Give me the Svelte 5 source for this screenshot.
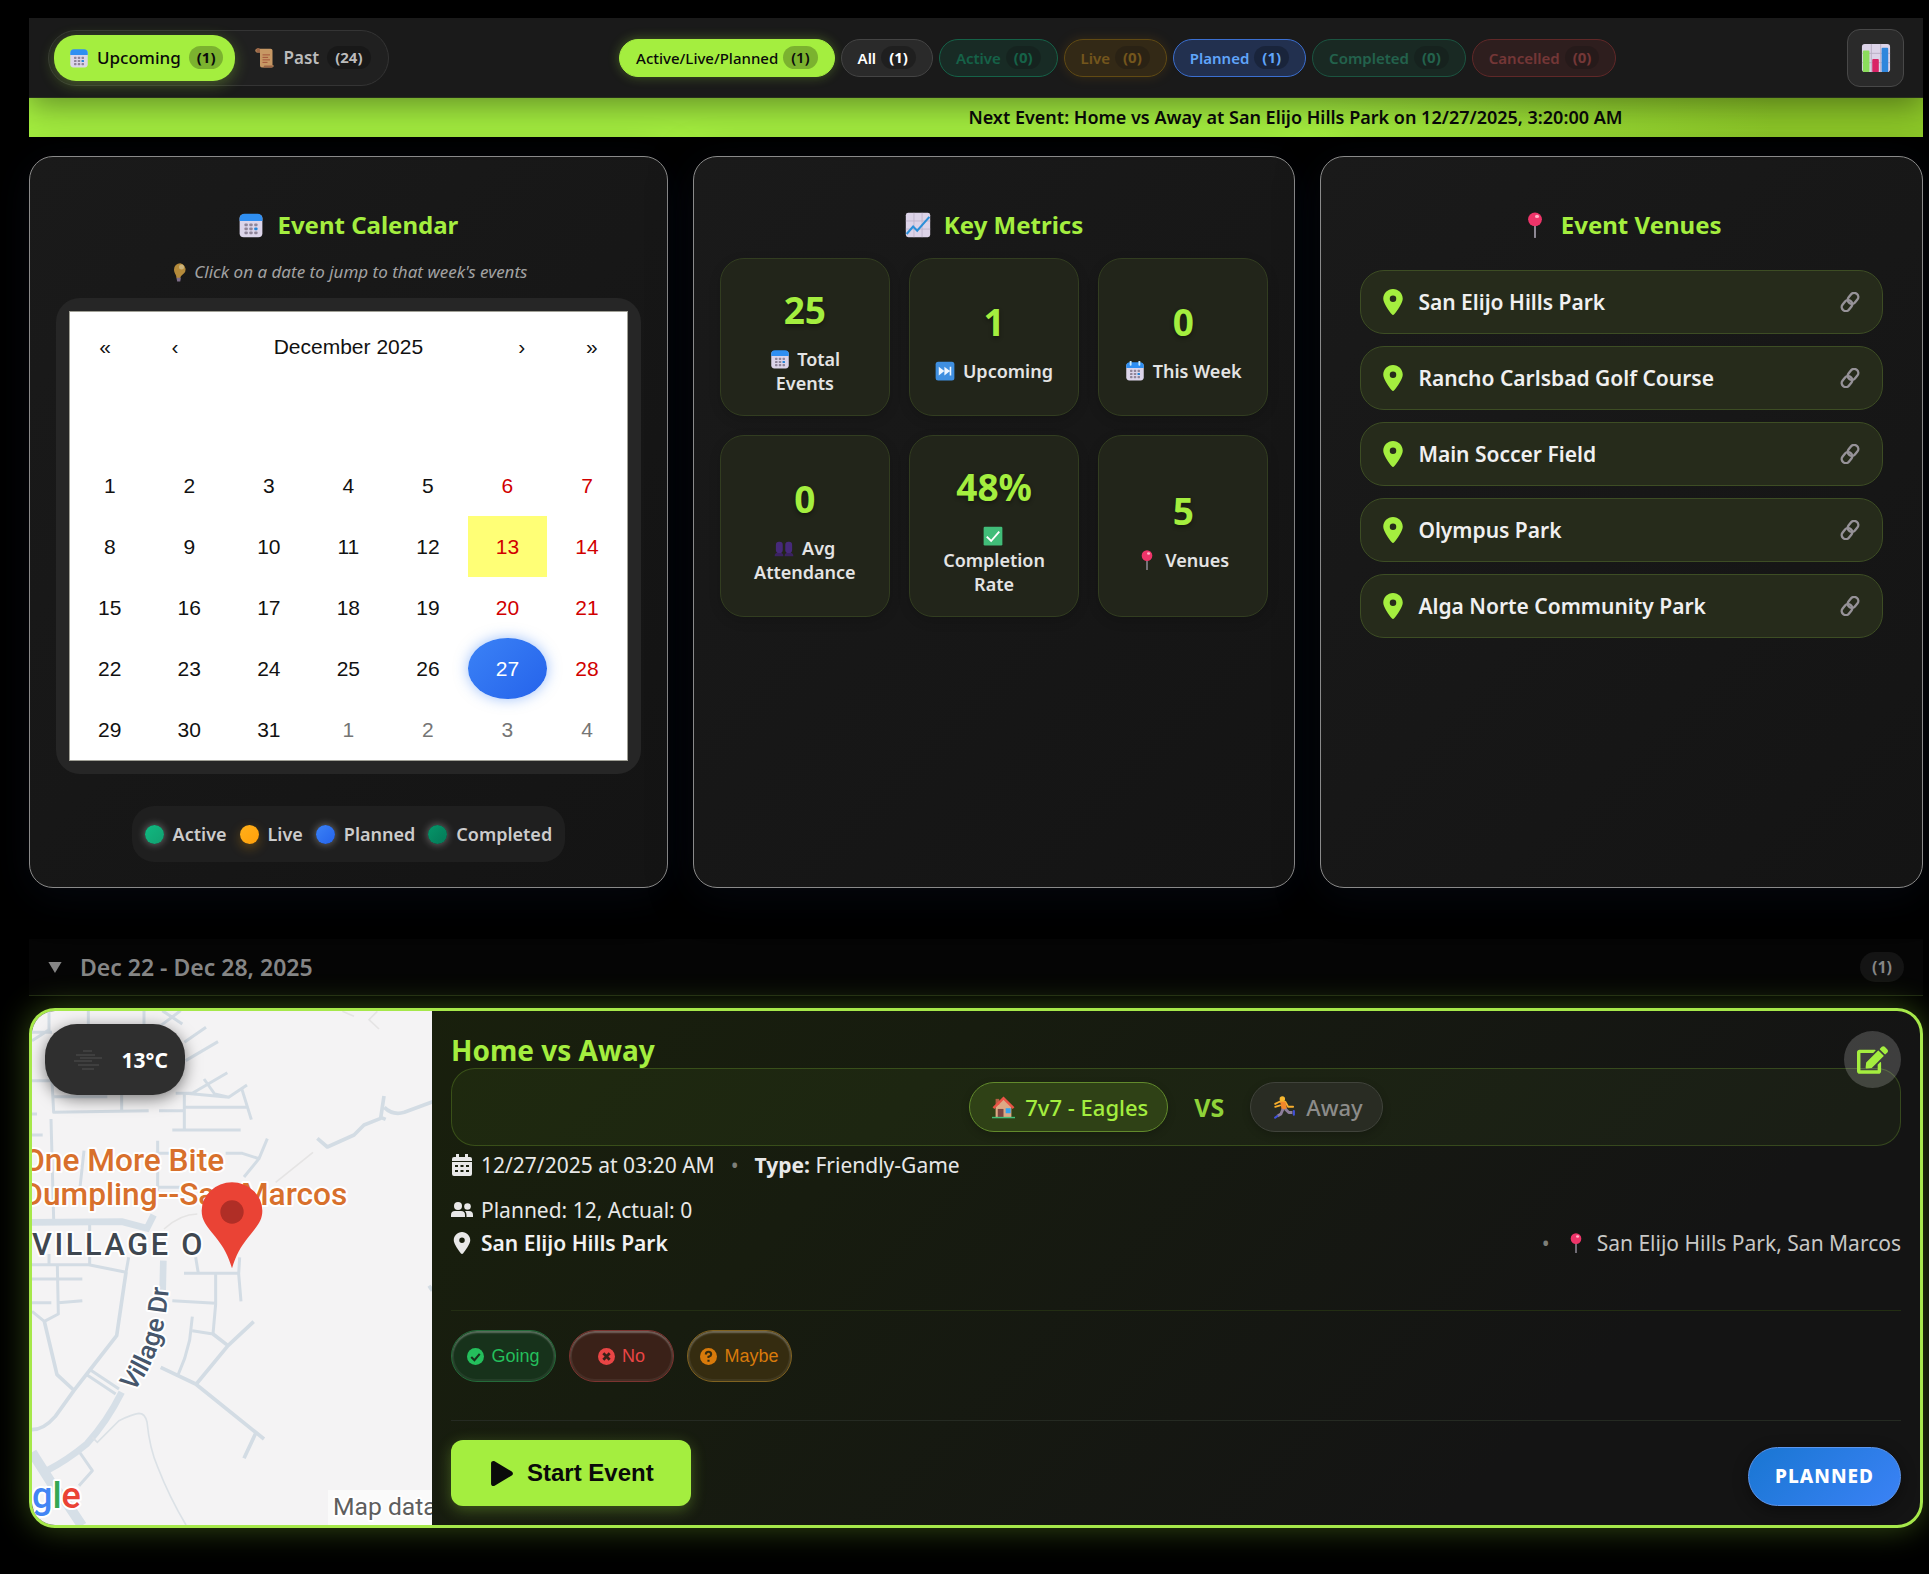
<script>
let view = $state('Upcoming');
let filter = $state('Active/Live/Planned');

const views = [
    { title: 'Upcoming', count: 1, icon: 'calendar' },
    { title: 'Past', count: 24, icon: 'scroll' },
];

const filters = [
    { title: 'Active/Live/Planned', count: 1, tone: 'all' },
    { title: 'All', count: 1, tone: 'all' },
    { title: 'Active', count: 0, tone: 'active' },
    { title: 'Live', count: 0, tone: 'live' },
    { title: 'Planned', count: 1, tone: 'planned' },
    { title: 'Completed', count: 0, tone: 'completed' },
    { title: 'Cancelled', count: 0, tone: 'cancelled' },
];

const metrics = [
    { value: '25', label: 'Total Events', icon: 'calendar' },
    { value: '1', label: 'Upcoming', icon: 'next' },
    { value: '0', label: 'This Week', icon: 'rings' },
    { value: '0', label: 'Avg Attendance', icon: 'people' },
    { value: '48%', label: 'Completion Rate', icon: 'check' },
    { value: '5', label: 'Venues', icon: 'pushpin' },
];

const venues = [
    'San Elijo Hills Park',
    'Rancho Carlsbad Golf Course',
    'Main Soccer Field',
    'Olympus Park',
    'Alga Norte Community Park',
];

const legend = ['Active', 'Live', 'Planned', 'Completed'];

// five weeks, Monday first, running over into January
const weeks = Array.from({ length: 5 }, (_, w) =>
    Array.from({ length: 7 }, (_, d) => {
        const n = w * 7 + d + 1;
        return { day: n > 31 ? n - 31 : n, weekend: d > 4, other: n > 31, today: n === 13, event: n === 27 };
    })
);
</script>

{#snippet emoji(name)}
  <svg class="emoji" viewBox="0 0 32 32" aria-hidden="true">
    {#if name === 'calendar' || name === 'rings'}
      <rect x="2" y="3" width="28" height="28" rx="5" fill="#dcd5ea" />
      <path d="M2 11V8a6 6 0 0 1 6-6h16a6 6 0 0 1 6 6v3z" fill="#2f8ff2" />
      {#each [15, 20, 25] as y}
        {#each [8, 14, 20] as x}
          <rect {x} y={y - 1} width="4" height="3.5" rx="1" fill={x === 20 && y === 20 ? '#2585d8' : '#8f8599'} />
        {/each}
      {/each}
      {#if name === 'rings'}
        <path d="M9 0v6M23 0v6" stroke="#c9ecff" stroke-width="3" stroke-linecap="round" />
      {/if}
    {:else if name === 'scroll'}
      <path d="M3 1h22a3 3 0 0 1 3 3v23l2 1a3 3 0 0 1-3 3H11a3 3 0 0 1-3-3V7H4a3 3 0 0 1-1-6z" fill="#c79864" />
      <path d="M2 3a3 3 0 0 1 6 0v4H4a2 2 0 0 1-2-2zM15 28h14a3 3 0 0 1-3 3H13z" fill="#9a6546" />
      <path d="M12 11h12M12 15h9M12 19h12M12 23h8" stroke="#a4553c" stroke-width="1.6" />
    {:else if name === 'growth'}
      <rect x="1" y="1" width="30" height="30" rx="3" fill="#dcd3e8" />
      <path d="M11 1v30M21 1v30M1 11h30M1 21h30" stroke="#bdb2c9" stroke-width="1" />
      <path d="M2 27l8-9 5 5L30 6" fill="none" stroke="#2b8fd8" stroke-width="2.6" />
    {:else if name === 'bars'}
      <rect x="1" y="1" width="30" height="30" rx="3" fill="#dcd3e8" />
      <path d="M11 1v30M21 1v30M1 11h30M1 21h30" stroke="#b7adc3" />
      <rect x="2" y="8" width="7" height="23" rx="1" fill="#8bdc5c" />
      <rect x="12" y="17" width="7" height="14" rx="1" fill="#d92366" />
      <rect x="22" y="5" width="7" height="26" rx="1" fill="#2f86dc" />
    {:else if name === 'pushpin'}
      <path d="M16 17v14" stroke="#9c96a3" stroke-width="2.2" stroke-linecap="round" />
      <circle cx="16" cy="9" r="8.5" fill="#ee3469" />
      <ellipse cx="18.500" cy="5.500" rx="2.500" ry="2" fill="#ffb3c8" />
    {:else if name === 'bulb'}
      <path d="M18 2a10 10 0 0 1 8 13c-1 4-7 5-8 11h-6c0-6-4-8-4-14A10 10 0 0 1 18 2z" fill="#b48a3a" />
      <circle cx="20" cy="8" r="4" fill="#cdb47a" />
      <path d="M12 25h7l-1 6h-5z" fill="#7d6d88" />
    {:else if name === 'next'}
      <rect x="1" y="1" width="30" height="30" rx="4" fill="#3f8fe0" />
      <path d="M6 9l9 7-9 7zM15 9l9 7-9 7zM23.500 9h2.500v14h-2.500z" fill="#eef6ff" />
    {:else if name === 'people'}
      <path d="M1 29c0-4 2-6 7-6s7 2 7 6zM17 29c0-4 2-6 7-6s7 2 7 6z" fill="#3b2262" />
      <rect x="3" y="6" width="11" height="18" rx="5" fill="#46297a" />
      <rect x="18" y="6" width="11" height="18" rx="5" fill="#46297a" />
    {:else if name === 'check'}
      <rect x="1" y="1" width="30" height="30" rx="2" fill="#41bd79" />
      <path d="M6 17l7 7L26 9" fill="none" stroke="#fff" stroke-width="3" />
    {:else if name === 'house'}
      <path d="M5 14L16 4l11 10v16H5z" fill="#dda985" />
      <path d="M5 4h5v8H5z" fill="#b25d42" />
      <path d="M2 17L16 3l14 14" fill="none" stroke="#ea5446" stroke-width="3.4" />
      <path d="M8 18h8v12H8z" fill="#7d4540" />
      <path d="M19 17h7v7h-7z" fill="#36a3ee" />
      <path d="M0 29h32v2H0z" fill="#45bf78" />
    {:else if name === 'runner'}
      <circle cx="13" cy="4" r="3.800" fill="#f6b72f" />
      <path d="M3 11l6-3h8l4 7h7M10 13l-7 2" fill="none" stroke="#f7ad2c" stroke-width="2.600" stroke-linecap="round" stroke-linejoin="round" />
      <path d="M10 8h7l3 11h-8z" fill="#f4862b" />
      <path d="M14 18l-3 7-5 3M17 18l5 5h5" fill="none" stroke="#8d7e9b" stroke-width="4" stroke-linejoin="round" />
      <path d="M6 28l-3 2M29 21v5" stroke="#4051d8" stroke-width="3" stroke-linecap="round" />
    {:else if name === 'link'}
      <g fill="none" stroke="#969298" stroke-width="3.800" transform="rotate(-50 16 16)">
        <rect x="-1" y="9.500" width="19" height="13" rx="6.500" />
        <rect x="14" y="9.500" width="19" height="13" rx="6.500" />
      </g>
    {/if}
  </svg>
{/snippet}

{#snippet marker()}
  <svg class="marker" viewBox="0 0 384 512" fill="currentColor" aria-hidden="true">
    <path d="M215.700 499.200C267 435 384 279.400 384 192 384 86 298 0 192 0S0 86 0 192c0 87.400 117 243 168.300 307.200 12.300 15.300 35.100 15.300 47.400 0zM192 128a64 64 0 1 1 0 128 64 64 0 1 1 0-128z" />
  </svg>
{/snippet}

<div class="page">
  <header class="toolbar">
    <nav class="views">
      {#each views as item}
        <button class="view" class:selected={view === item.title} onclick={() => (view = item.title)}>
          {@render emoji(item.icon)}
          {item.title}
          <span class="count">({item.count})</span>
        </button>
      {/each}
    </nav>
    <div class="filters">
      {#each filters as item}
        <button
          class="filter {item.tone}"
          class:selected={filter === item.title}
          class:empty={item.count === 0}
          onclick={() => (filter = item.title)}
        >
          {item.title}
          <span class="count">({item.count})</span>
        </button>
      {/each}
    </div>
    <button class="stats" aria-label="Statistics">{@render emoji('bars')}</button>
  </header>

  <div class="ticker">
    <span>Next Event: Home vs Away at San Elijo Hills Park on 12/27/2025, 3:20:00 AM</span>
  </div>

  <div class="panels">
    <section class="panel">
      <h2>{@render emoji('calendar')}Event Calendar</h2>
      <p class="hint">{@render emoji('bulb')}Click on a date to jump to that week's events</p>
      <div class="calendar-wrap">
        <div class="calendar">
          <div class="calendar-nav">
            <button class="arrow">«</button>
            <button class="arrow">‹</button>
            <button class="month">December 2025</button>
            <button class="arrow">›</button>
            <button class="arrow">»</button>
          </div>
          <table>
            <tbody>
              {#each weeks as week}
                <tr>
                  {#each week as date}
                    <td>
                      <button
                        class="day"
                        class:weekend={date.weekend}
                        class:other={date.other}
                        class:today={date.today}
                        class:event={date.event}>{date.day}</button
                      >
                    </td>
                  {/each}
                </tr>
              {/each}
            </tbody>
          </table>
        </div>
      </div>
      <ul class="legend">
        {#each legend as item}
          <li><i class="dot {item.toLowerCase()}"></i>{item}</li>
        {/each}
      </ul>
    </section>

    <section class="panel">
      <h2>{@render emoji('growth')}Key Metrics</h2>
      <div class="metrics">
        {#each metrics as item}
          <div class="metric">
            <strong>{item.value}</strong>
            <span>{@render emoji(item.icon)} {item.label}</span>
          </div>
        {/each}
      </div>
    </section>

    <section class="panel">
      <h2>{@render emoji('pushpin')}Event Venues</h2>
      <div class="venues">
        {#each venues as venue}
          <a class="venue" href="#venue">
            {@render marker()}
            <span>{venue}</span>
            {@render emoji('link')}
          </a>
        {/each}
      </div>
    </section>
  </div>

  <button class="week">
    <svg class="caret" viewBox="0 0 12 10" aria-hidden="true"><path d="M0 0h12L6 10z" fill="currentColor" /></svg>
    <span class="range">Dec 22 - Dec 28, 2025</span>
    <span class="week-count">(1)</span>
  </button>

  <article class="event-card">
    <div class="media">
      <svg class="map" viewBox="9 11 1200 1542" preserveAspectRatio="xMidYMid slice" role="img" aria-label="Map">
        <rect x="0" y="0" width="1220" height="1570" fill="#f4f3f4" />
        <g fill="none" stroke="#d3dce4" stroke-width="9" stroke-linejoin="round">
          <path d="M60 10v60M178 10v50M345 10v40M9 75h60M9 100l50-32M400 10l60 40M455 10l-60 45" />
          <path d="M9 220h60l5 95 285-5M390 310h76M278 230v80M75 268h160M466 105l65-45M470 160l97-57" />
          <path d="M440 258h50l105-62M525 215l32 45 42 10 55-37M637 240l30 97M470 258l130 12M466 255v115M470 300h182M430 368h205" />
          <path d="M66 335l8 300M9 320h15M9 383h32M386 400v150M165 430l-12 110M590 438h50l50 16 25-60M690 454l-45 55M380 438h60M386 540h90" />
          <path d="M60 740v30M182 650v120M9 772h170l112 23 8-45M85 775l3 145-42 22-37-30M9 815h151M9 886h58M88 886l72-6" />
          <path d="M46 942l38 160 50 46M291 795l-28 190-78 100-50 64-56 78q-35 40-70 40" stroke-width="11" />
          <path d="M465 798h160M632 750l-3 50 7 82M500 750l8 48M560 800v90l-8 90-62-10M430 880l130 8M490 928l-8 70-15 55-20 50" />
          <path d="M552 980l45 35 77-72M597 1015l-95 115M395 1080l105 50 205 165M680 1278l-35 75" stroke-width="11" />
          <path d="M865 393l30 26 80-36 30-30 50-20 10-67M1055 330l15 6M1066 300q25 25 60 15l85-32M1200 835l10 15" stroke-width="11" />
          <path d="M145 1325l45 65-40 45M180 1085l90 60M170 1100l90 60" />
        </g>
        <g fill="none" stroke="#d6dfe7" stroke-width="20">
          <path d="M9 645l270-2 75 20 20-40M403 760l-2 90M278 1155q-45 90-105 155-60 50-120 80" />
          <path d="M9 1335l60 95 50 65 40 60" stroke-width="30" />
        </g>
        <g fill="none" stroke="#dbe1e6" stroke-width="5">
          <path d="M190 1290l15 15 65-65q40-20 60-22 18 0 24 26 8 80 32 135 35 90 85 174" />
          <path d="M740 525l112-90M405 665q50-45 100-45M940 12l35 15M1045 12l-25 25 30 28" stroke="#e5e4e4" />
        </g>
        <g class="place">
          <text x="-18" y="492">One More Bite</text>
          <text x="-20" y="592">Dumpling--San Marcos</text>
        </g>
        <text class="district" x="9" y="742">VILLAGE O</text>
        <path id="village-dr" d="M312 1154Q412 1040 422 800" fill="none" />
        <text class="street"><textPath href="#village-dr">Village Dr</textPath></text>
        <path d="M609 783c-12-40-24-62-50-95-28-34-41-50-41-78a91 85 0 0 1 182 0c0 28-13 44-41 78-26 33-38 55-50 95z" fill="#ea4335" />
        <circle cx="609" cy="614" r="35" fill="#b02e26" />
        <text class="google" x="9" y="1503"><tspan fill="#4285f4">g</tspan><tspan fill="#34a853">l</tspan><tspan fill="#ea4335">e</tspan></text>
        <rect x="897" y="1448" width="320" height="110" fill="#fafafa" />
        <text class="credit" x="912" y="1523">Map data</text>
      </svg>
      <div class="weather">
        <svg viewBox="0 0 28 20" aria-hidden="true">
          <path d="M9 1h9M2 5h19M6 8h22M0 11h18M4 15h21M8 19h12" stroke="#454545" stroke-width="1.500" />
        </svg>
        13°C
      </div>
    </div>

    <div class="details">
      <h3>Home vs Away</h3>
      <div class="teams">
        <span class="team home">{@render emoji('house')}7v7 - Eagles</span>
        <b class="vs">VS</b>
        <span class="team away">{@render emoji('runner')}Away</span>
      </div>
      <div class="row when">
        <svg class="glyph" viewBox="0 0 20 22" fill="currentColor" fill-rule="evenodd" aria-hidden="true">
          <path d="M4 0h3v3h6V0h3v3h2a2 2 0 0 1 2 2v2H0V5a2 2 0 0 1 2-2h2zM0 8h20v12a2 2 0 0 1-2 2H2a2 2 0 0 1-2-2zM3 11v2h3v-2zM8.500 11v2h3v-2zM14 11v2h3v-2zM3 16v2h3v-2zM8.500 16v2h3v-2zM14 16v2h3v-2z" />
        </svg>
        12/27/2025 at 03:20 AM
        <span class="sep">•</span>
        <span><b>Type:</b> Friendly-Game</span>
      </div>
      <div class="row">
        <svg class="glyph" viewBox="0 0 22 18" fill="currentColor" aria-hidden="true">
          <circle cx="7" cy="5" r="4" /><circle cx="16.500" cy="5.500" r="3.300" />
          <path d="M0 14q0-4 4-4h6q4 0 4 4v2H0zM15.500 16v-2q0-2.500-1.500-4h4q4 0 4 4v2z" />
        </svg>
        Planned: 12, Actual: 0
      </div>
      <div class="row">
        {@render marker()}
        <span class="park">San Elijo Hills Park</span>
        <span class="sep end">•</span>
        <span class="address">{@render emoji('pushpin')}San Elijo Hills Park, San Marcos</span>
      </div>

      <div class="rsvp">
        <button class="answer going">
          <svg viewBox="0 0 16 16" aria-hidden="true"><circle cx="8" cy="8" r="8" fill="currentColor" /><path d="M4 8.500l3 3 5-6" fill="none" stroke="#17321b" stroke-width="2" /></svg>
          Going
        </button>
        <button class="answer no">
          <svg viewBox="0 0 16 16" aria-hidden="true"><circle cx="8" cy="8" r="8" fill="currentColor" /><path d="M5 5l6 6M11 5l-6 6" stroke="#3a2118" stroke-width="2.600" /></svg>
          No
        </button>
        <button class="answer maybe">
          <svg viewBox="0 0 16 16" aria-hidden="true"><circle cx="8" cy="8" r="8" fill="currentColor" /><path d="M5.500 6q0-2.500 2.500-2.500T10.500 6Q10.500 7.300 8 8.300V9.500M8 11v2" fill="none" stroke="#352c10" stroke-width="2" /></svg>
          Maybe
        </button>
      </div>

      <footer>
        <button class="start">
          <svg viewBox="0 0 448 512" fill="currentColor" aria-hidden="true">
            <path d="M424.400 214.700L72.400 6.600C43.800-10.300 0 6.100 0 47.900V464c0 37.500 40.700 60.100 72.400 41.300l352-208c31.400-18.500 31.500-64.100 0-82.600z" />
          </svg>
          Start Event
        </button>
        <span class="status">PLANNED</span>
      </footer>
    </div>

    <button class="edit" aria-label="Edit event">
      <svg viewBox="0 0 576 512" fill="currentColor" aria-hidden="true">
        <path d="M402.600 83.200l90.200 90.200c3.800 3.800 3.800 10 0 13.800L274.400 405.600l-92.800 10.300c-12.400 1.400-22.900-9.100-21.500-21.500l10.300-92.800L388.800 83.200c3.800-3.800 10-3.800 13.800 0zm162-22.900l-48.800-48.800c-15.200-15.200-39.900-15.200-55.200 0l-35.400 35.400c-3.800 3.800-3.800 10 0 13.800l90.200 90.200c3.800 3.800 10 3.800 13.800 0l35.400-35.400c15.200-15.300 15.200-40 0-55.200zM384 346.200V448H64V128h229.800c3.200 0 6.200-1.300 8.500-3.500l40-40c7.600-7.600 2.200-20.500-8.500-20.500H48C21.500 64 0 85.500 0 112v352c0 26.500 21.500 48 48 48h352c26.500 0 48-21.500 48-48V306.200c0-10.700-12.900-16-20.500-8.500l-40 40c-2.200 2.300-3.500 5.300-3.500 8.500z" />
      </svg>
    </button>
  </article>
</div>

<style>
:global(body) {
  background: #000;
}

.page {
  --lime: #a4ee3f;
  --arial: "Liberation Sans", Arial, sans-serif;
  padding: 18px 6px 44px 29px;
  color: #e8e8e8;
  font-family: "Noto Sans", "Open Sans", sans-serif;
  font-size: 21px;
}

.page * {
  box-sizing: border-box;
}

button {
  margin: 0;
  padding: 0;
  border: 0;
  background: none;
  color: inherit;
  font: inherit;
  cursor: pointer;
}

svg {
  display: block;
  flex: none;
}

.emoji {
  width: 20px;
  height: 20px;
}

.marker {
  width: 20px;
  height: 26px;
}

/* toolbar */
.toolbar {
  position: relative;
  z-index: 1;
  display: flex;
  align-items: center;
  justify-content: space-between;
  height: 80px;
  padding: 0 19px;
  background: #1a1a1a;
  border-bottom: 1px solid #27301c;
  box-shadow: 0 8px 32px rgba(0, 0, 0, 0.4);
}

.views {
  display: flex;
  gap: 5px;
  padding: 4px 5px;
  border: 1px solid #343434;
  border-radius: 28px;
  background: #202020;
}

.view {
  display: flex;
  align-items: center;
  gap: 8px;
  height: 46px;
  padding: 0 12px 0 15px;
  border-radius: 22px;
  color: #bbb;
  font-size: 17px;
  font-weight: 600;
}

.view.selected {
  background: var(--lime);
  color: #0a0a0a;
  font-weight: 500;
  box-shadow: 0 4px 15px rgba(164, 238, 63, 0.3);
}

.count {
  padding: 0 8px;
  border-radius: 12px;
  background: rgba(0, 0, 0, 0.25);
  font-size: 15px;
  font-weight: 700;
  line-height: 23px;
}

.filters {
  display: flex;
  gap: 6px;
}

.filter {
  display: flex;
  align-items: center;
  gap: 5px;
  height: 38px;
  padding: 0 16px;
  border: 1px solid;
  border-radius: 19px;
  font-size: 15px;
  font-weight: 600;
}

.filter.all {
  border-color: #444;
  background: #2a2a2a;
  color: #fff;
}

.filter.active {
  border-color: #10b981;
  background: rgba(16, 185, 129, 0.25);
  color: #10b981;
}

.filter.live {
  border-color: #b8860b;
  background: rgba(255, 165, 0, 0.25);
  color: #e0a020;
  box-shadow: 0 0 12px rgba(255, 165, 0, 0.3);
}

.filter.planned {
  border-color: #3b6fd0;
  background: #22304f;
  color: #60a5fa;
}

.filter.completed {
  border-color: #1d9c70;
  background: rgba(16, 185, 129, 0.22);
  color: #2fb98a;
}

.filter.cancelled {
  border-color: #b53a3a;
  background: rgba(239, 68, 68, 0.22);
  color: #e05a5a;
}

.filter.empty {
  opacity: 0.45;
}

.filter.selected {
  border-color: var(--lime);
  background: var(--lime);
  color: #0a0a0a;
  font-weight: 500;
  box-shadow: 0 0 12px rgba(164, 238, 63, 0.3);
}

.filter.selected .count {
  font-weight: 600;
}

.stats {
  display: grid;
  place-items: center;
  width: 57px;
  height: 58px;
  border: 1px solid #484848;
  border-radius: 13px;
  background: #2a2a2a;
}

.stats .emoji {
  width: 30px;
  height: 30px;
}

.ticker {
  padding-left: 49.6%;
  overflow: hidden;
  background: linear-gradient(90deg, #a4ee3f 68%, #8dc828 92%);
  color: #0a0a0a;
  font-size: 18px;
  font-weight: 600;
  line-height: 39px;
  white-space: nowrap;
}

/* panels */
.panels {
  display: grid;
  grid-template-columns: minmax(0, 106fr) minmax(0, 100fr) minmax(0, 100fr);
  gap: 25px;
  margin: 19px 0 51px;
}

.panel {
  padding: 50px 26px 25px;
  border: 1px solid #8a8a8a;
  border-radius: 24px;
  background: linear-gradient(135deg, #1a1a1a, #141414);
  box-shadow: 0 8px 40px rgba(10, 16, 30, 0.5);
}

h2 {
  display: flex;
  align-items: center;
  justify-content: center;
  gap: 13px;
  margin: 0 0 15px;
  color: var(--lime);
  font-size: 24px;
  font-weight: 700;
  line-height: 36px;
}

h2 .emoji {
  width: 26px;
  height: 26px;
}

.hint {
  display: flex;
  align-items: center;
  justify-content: center;
  gap: 5px;
  margin: 0 0 12px;
  color: #a2a2a2;
  font-size: 17px;
  font-style: italic;
  line-height: 28px;
}

.calendar-wrap {
  padding: 13px;
  border-radius: 24px;
  background: #262626;
}

.calendar {
  border: 1px solid #a0a096;
  background: #fff;
  color: #111;
  font-family: var(--arial);
  font-size: 21px;
}

.calendar-nav {
  display: flex;
  height: 70px;
  margin-bottom: 73px;
}

.arrow {
  width: 70px;
}

.month {
  flex: 1;
}

table {
  width: 100%;
  table-layout: fixed;
  border-collapse: collapse;
}

td {
  padding: 0;
}

.day {
  display: block;
  width: 100%;
  height: 61px;
}

.weekend {
  color: #d10000;
}

.other {
  color: #757575;
}

.today {
  background: #ffff76;
}

.event {
  border-radius: 50%;
  background: linear-gradient(135deg, #3b82f6, #2563eb);
  box-shadow: 0 0 14px rgba(59, 130, 246, 0.5);
  color: #fff;
}

.legend {
  display: flex;
  justify-content: center;
  gap: 13px;
  width: fit-content;
  margin: 32px auto 0;
  padding: 0 13px;
  border-radius: 22px;
  background: #1f1f1f;
  color: #ccc;
  font-size: 18px;
  font-weight: 600;
  line-height: 56px;
  list-style: none;
}

.legend li {
  display: flex;
  align-items: center;
  gap: 9px;
}

.dot {
  width: 19px;
  height: 19px;
  border-radius: 50%;
  box-shadow: 0 0 8px rgba(255, 255, 255, 0.4);
}

.dot.active {
  background: linear-gradient(135deg, #10b981, #12a070);
}

.dot.live {
  background: linear-gradient(135deg, #ffb01a, #ff9f0a);
  box-shadow: 0 4px 12px rgba(255, 165, 0, 0.3);
}

.dot.planned {
  background: linear-gradient(135deg, #3b82f6, #2563eb);
}

.dot.completed {
  background: linear-gradient(135deg, #059669, #047857);
}

.metrics {
  display: grid;
  grid-template-columns: repeat(3, 1fr);
  gap: 19px;
}

.metric {
  display: flex;
  flex-direction: column;
  justify-content: center;
  padding: 25px 22px 20px;
  border: 1px solid #323d20;
  border-radius: 24px;
  background: #22251a;
  box-shadow: 0 4px 12px rgba(0, 0, 0, 0.15);
  text-align: center;
}

.metric strong {
  margin-bottom: 11px;
  color: var(--lime);
  font-size: 37px;
  line-height: 52px;
  text-shadow: 0 2px 4px rgba(0, 0, 0, 0.4);
}

.metric span {
  color: #e4e4e4;
  font-size: 18px;
  font-weight: 600;
  line-height: 24px;
}

.metric .emoji {
  display: inline-block;
  margin-right: 3px;
  vertical-align: -3px;
}

.venues {
  display: flex;
  flex-direction: column;
  gap: 12px;
  padding: 12px 13px;
}

.venue {
  display: flex;
  align-items: center;
  gap: 15px;
  height: 64px;
  padding: 0 22px;
  border: 1px solid #3d4d24;
  border-radius: 24px;
  background: #262b1b;
  color: #f0f0f0;
  font-weight: 600;
  text-decoration: none;
}

.venue .marker {
  color: var(--lime);
}

.venue span {
  flex: 1;
}

/* week */
.week {
  display: flex;
  align-items: center;
  width: 100%;
  height: 57px;
  padding: 0 19px;
  border-bottom: 1px solid #1d2611;
  background: #050505;
  color: #858585;
  text-align: left;
}

.caret {
  width: 14px;
  height: 11px;
  margin-right: 18px;
}

.range {
  flex: 1;
  font-size: 23px;
  font-weight: 600;
}

.week-count {
  padding: 0 12px;
  border-radius: 15px;
  background: #141414;
  font-size: 16px;
  font-weight: 700;
  line-height: 30px;
}

.event-card {
  position: relative;
  display: flex;
  margin-top: 12px;
  border: 3px solid #a6e84a;
  border-radius: 26px;
  background: linear-gradient(135deg, #1a220b, #171c0f 40%, #141414 80%);
  box-shadow: 0 0 32px rgba(164, 238, 63, 0.32);
}

.media {
  position: relative;
  width: 400px;
  border-radius: 23px 0 0 23px;
  overflow: hidden;
}

.map {
  width: 100%;
  height: 100%;
}

.map text {
  font-family: Roboto, sans-serif;
  font-weight: 500;
  paint-order: stroke;
  stroke: #fff;
  stroke-width: 12px;
  stroke-linejoin: round;
}

.map .place {
  fill: #d8702c;
  font-size: 95px;
}

.map .district {
  fill: #3f4750;
  font-size: 92px;
  letter-spacing: 8px;
}

.map .street {
  fill: #46566b;
  font-size: 78px;
}

.map .google {
  font-size: 108px;
}

.map .credit {
  fill: #5e5e5e;
  font-size: 74px;
  font-weight: 400;
}

.weather {
  position: absolute;
  top: 13px;
  left: 13px;
  display: flex;
  align-items: center;
  justify-content: space-between;
  width: 140px;
  height: 71px;
  padding: 0 17px 0 29px;
  border-radius: 32px;
  background: #2f2f2f;
  box-shadow: 0 4px 16px rgba(0, 0, 0, 0.5);
  color: #fff;
  font-weight: 700;
}

.weather svg {
  width: 28px;
  height: 20px;
}

.details {
  flex: 1;
  min-width: 0;
  padding: 22px 19px 19px;
}

h3 {
  margin: 0;
  color: var(--lime);
  font-size: 28px;
  font-weight: 700;
  line-height: 35px;
}

.teams {
  display: flex;
  align-items: center;
  justify-content: center;
  gap: 26px;
  height: 78px;
  margin-bottom: 2px;
  border: 1px solid rgba(164, 238, 63, 0.2);
  border-radius: 24px;
  background: rgba(164, 238, 63, 0.05);
}

.team {
  display: flex;
  align-items: center;
  gap: 10px;
  height: 50px;
  padding: 0 19px 0 22px;
  border: 1px solid;
  border-radius: 25px;
  font-size: 22px;
  font-weight: 500;
  box-shadow: 0 3px 8px rgba(0, 0, 0, 0.2);
}

.team .emoji {
  width: 23px;
  height: 23px;
}

.home {
  border-color: #628a2c;
  background: #2f4116;
  color: var(--lime);
}

.away {
  border-color: #40433b;
  background: #292c23;
  color: #8c8c8a;
}

.vs {
  color: #8fd239;
  font-size: 25px;
}

.row {
  display: flex;
  align-items: center;
  height: 33px;
}

.when {
  margin-bottom: 12px;
}

.glyph,
.row .marker {
  width: 22px;
  height: 22px;
  margin-right: 8px;
}

.sep {
  width: 40px;
  color: #7d7f79;
  text-align: center;
}

.end {
  margin-left: auto;
}

.park {
  color: #f2f2f2;
  font-weight: 600;
}

.address {
  display: flex;
  align-items: center;
  gap: 11px;
  color: #c8c8c6;
}

.rsvp {
  display: flex;
  gap: 13px;
  margin-top: 51px;
  padding: 19px 0 38px;
  border-top: 1px solid #232e13;
}

.answer {
  display: flex;
  align-items: center;
  justify-content: center;
  gap: 7px;
  width: 105px;
  height: 52px;
  border: 1px solid;
  border-radius: 26px;
  box-shadow: inset 0 2px 2px rgba(255, 255, 255, 0.25), inset 0 0 0 2px rgba(255, 255, 255, 0.06);
  font-family: var(--arial);
  font-size: 18px;
}

.answer svg {
  width: 17px;
  height: 17px;
}

.going {
  border-color: #246b3a;
  background: #17321b;
  color: #24bf5c;
}

.no {
  border-color: #7c3430;
  background: #3a2118;
  color: #e94545;
}

.maybe {
  border-color: #806220;
  background: #352c10;
  color: #d87a0b;
}

footer {
  display: flex;
  align-items: flex-end;
  justify-content: space-between;
  padding-top: 19px;
  border-top: 1px solid #252a22;
}

.start {
  display: flex;
  align-items: center;
  gap: 14px;
  height: 66px;
  padding: 0 37px 0 40px;
  border-radius: 12px;
  background: var(--lime);
  box-shadow: 0 4px 15px rgba(164, 238, 63, 0.3);
  color: #0a0a0a;
  font-family: var(--arial);
  font-size: 24px;
  font-weight: 700;
}

.start svg {
  width: 22px;
  height: 25px;
}

.status {
  padding: 0 26px;
  border: 1px solid #5c96ee;
  border-radius: 30px;
  background: linear-gradient(135deg, #1976d2, #3b82f6);
  box-shadow: 0 4px 15px rgba(0, 0, 0, 0.4);
  color: #fff;
  font-size: 19px;
  font-weight: 800;
  letter-spacing: 1px;
  line-height: 57px;
}

.edit {
  position: absolute;
  top: 20px;
  right: 19px;
  display: grid;
  place-items: center;
  width: 57px;
  height: 57px;
  border-radius: 50%;
  background: rgba(255, 255, 255, 0.18);
  color: var(--lime);
}

.edit svg {
  width: 31px;
  height: 28px;
}
</style>
